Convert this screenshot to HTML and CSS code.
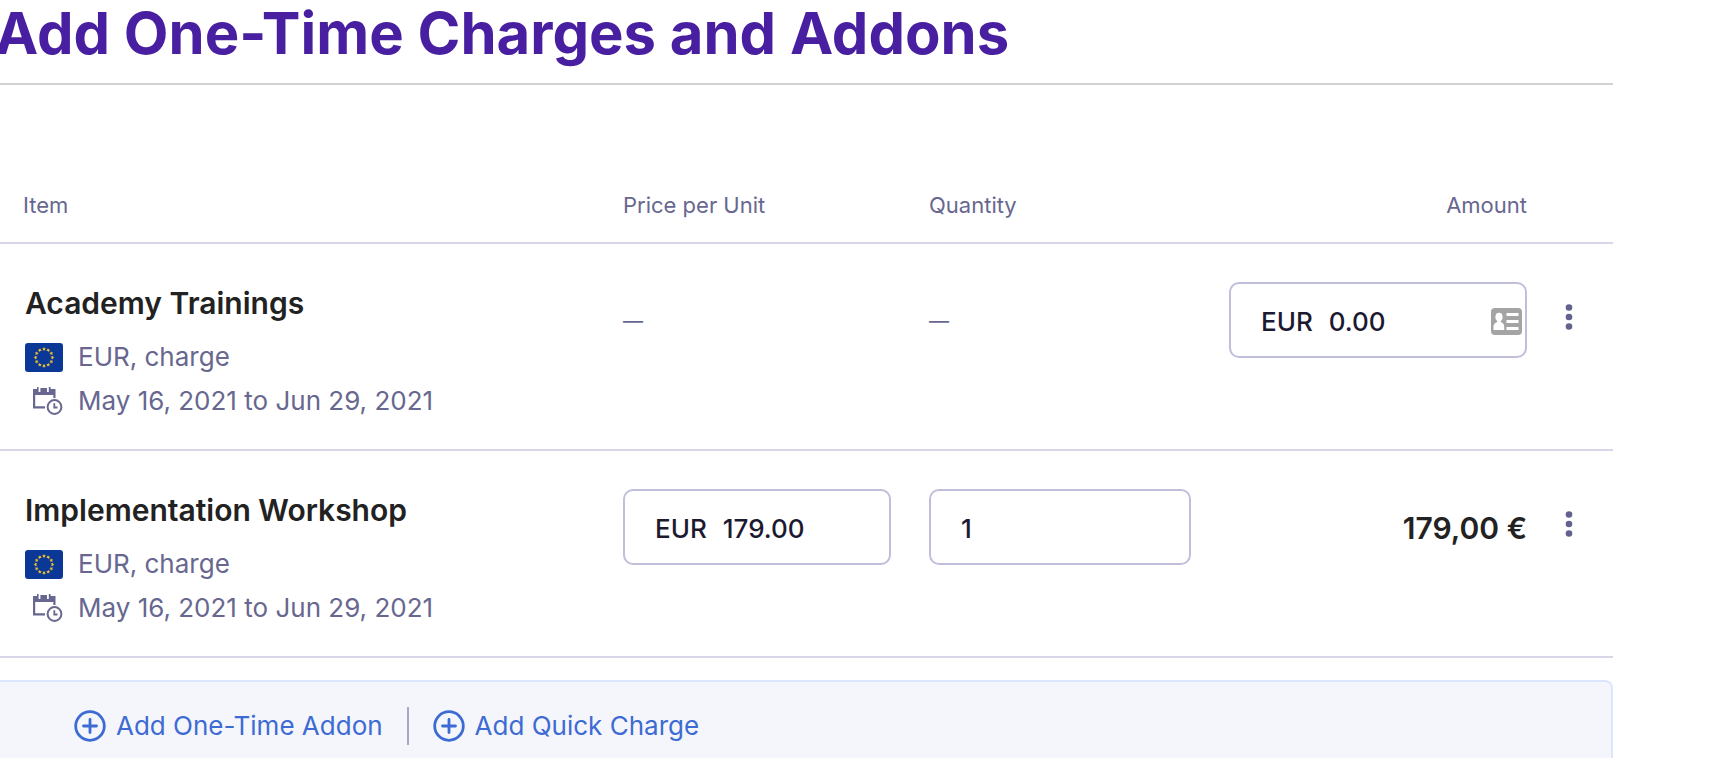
FILE: index.html
```html
<!DOCTYPE html>
<html lang="en">
<head>
<meta charset="utf-8">
<title>Add One-Time Charges and Addons</title>
<link rel="stylesheet" href="styles.css">
</head>
<body>
<svg class="sprite" aria-hidden="true">
  <symbol id="flag-eu" viewBox="0 0 38 29">
    <rect width="38" height="29" rx="3" fill="#0b3796"/>
    <g fill="#f0c52c">
      <path id="star" d="M19 4l.6 1.3 1.4.1-1.1.9.4 1.4-1.3-.8-1.3.8.4-1.4-1.1-.9 1.4-.1z"/>
      <use href="#star" transform="rotate(30 19 14.5)"/>
      <use href="#star" transform="rotate(60 19 14.5)"/>
      <use href="#star" transform="rotate(90 19 14.5)"/>
      <use href="#star" transform="rotate(120 19 14.5)"/>
      <use href="#star" transform="rotate(150 19 14.5)"/>
      <use href="#star" transform="rotate(180 19 14.5)"/>
      <use href="#star" transform="rotate(210 19 14.5)"/>
      <use href="#star" transform="rotate(240 19 14.5)"/>
      <use href="#star" transform="rotate(270 19 14.5)"/>
      <use href="#star" transform="rotate(300 19 14.5)"/>
      <use href="#star" transform="rotate(330 19 14.5)"/>
    </g>
  </symbol>
  <symbol id="calendar-clock" viewBox="0 0 30 30">
    <path fill="#67678f" d="M0 3h4V1h1.600v5h1.800V2h6.600v4h1.800V1H17.600v2H22.500V12H20.300V9H2.200V20.300H12V22.500H0z"/>
    <circle cx="21.500" cy="21" r="6.900" fill="none" stroke="#67678f" stroke-width="2"/>
    <path fill="none" stroke="#67678f" stroke-width="1.800" d="M21.300 17.200v4.300h3.200"/>
  </symbol>
  <symbol id="contact-card" viewBox="0 0 31 27">
    <rect width="31" height="27" rx="4" fill="#a4a4a4"/>
    <g fill="#fff">
      <ellipse cx="8" cy="9" rx="3.600" ry="4.300"/>
      <path d="M6.300 12h3.400v2c2.200.8 3.500 2.200 3.500 4.500V22H2.500v-3.500c0-2.300 1.400-3.700 3.800-4.500z"/>
      <rect x="15.500" y="5" width="12" height="3"/>
      <rect x="15.500" y="12" width="12" height="3"/>
      <rect x="15.500" y="19" width="12" height="3"/>
    </g>
  </symbol>
  <symbol id="dots" viewBox="0 0 8 28">
    <g fill="#62628f"><circle cx="4" cy="4.500" r="3.300"/><circle cx="4" cy="14" r="3.300"/><circle cx="4" cy="23.500" r="3.300"/></g>
  </symbol>
  <symbol id="circle-plus" viewBox="0 0 32 32">
    <g fill="none" stroke="#3d6bd3" stroke-width="2.800"><circle cx="16" cy="16" r="14.300"/><path stroke-linecap="round" d="M16 9.500v13M9.500 16h13"/></g>
  </symbol>
</svg>

<main class="page">
  <h1 class="title">Add One-Time Charges and Addons</h1>
  <table class="charges">
    <colgroup>
      <col><col class="col-price"><col class="col-quantity"><col class="col-amount"><col class="col-menu">
    </colgroup>
    <thead>
      <tr>
        <th scope="col" class="item-head">Item</th>
        <th scope="col">Price per Unit</th>
        <th scope="col">Quantity</th>
        <th scope="col" class="right">Amount</th>
        <td></td>
      </tr>
    </thead>
    <tbody>
      <tr>
        <td class="item">
          <div class="name">Academy Trainings</div>
          <div class="meta"><svg class="flag"><use href="#flag-eu"/></svg><span>EUR, charge</span></div>
          <div class="meta"><svg class="calendar"><use href="#calendar-clock"/></svg><span>May 16, 2021 to Jun 29, 2021</span></div>
        </td>
        <td><div class="cell empty">—</div></td>
        <td><div class="cell empty">—</div></td>
        <td class="amount">
          <div class="field">
            <label for="amount-1">EUR</label>
            <input id="amount-1" type="text" value="0.00">
            <svg class="card"><use href="#contact-card"/></svg>
          </div>
        </td>
        <td><button class="menu" type="button" aria-label="More actions"><svg><use href="#dots"/></svg></button></td>
      </tr>
      <tr>
        <td class="item">
          <div class="name">Implementation Workshop</div>
          <div class="meta"><svg class="flag"><use href="#flag-eu"/></svg><span>EUR, charge</span></div>
          <div class="meta"><svg class="calendar"><use href="#calendar-clock"/></svg><span>May 16, 2021 to Jun 29, 2021</span></div>
        </td>
        <td>
          <div class="field">
            <label for="price-2">EUR</label>
            <input id="price-2" type="text" value="179.00">
          </div>
        </td>
        <td>
          <div class="field">
            <input type="text" value="1" aria-label="Quantity">
          </div>
        </td>
        <td class="amount"><div class="cell total">179,00 €</div></td>
        <td><button class="menu" type="button" aria-label="More actions"><svg><use href="#dots"/></svg></button></td>
      </tr>
    </tbody>
  </table>
  <div class="actions">
    <button class="add" type="button"><svg><use href="#circle-plus"/></svg>Add One-Time Addon</button>
    <span class="divider"></span>
    <button class="add" type="button"><svg><use href="#circle-plus"/></svg>Add Quick Charge</button>
  </div>
</main>
</body>
</html>
```
FILE: styles.css
```css
* { box-sizing: border-box; }

body {
  margin: 0;
  overflow: hidden;
  background: #fff;
  color: #67678f;
  font: 26px/44px Inter, "Liberation Sans", sans-serif;
}

svg { display: block; flex: none; }
.sprite { position: absolute; width: 0; height: 0; }

.page { margin-right: 99px; }

.title {
  margin: 0 0 0 -5px;
  padding: 0 0 17px 0;
  box-shadow: 0 2px #d2d2d2;
  color: #471fa0;
  font-size: 58px;
  line-height: 66px;
  font-weight: 700;
  white-space: nowrap;
}

.charges {
  width: 100%;
  margin-top: 82px;
  table-layout: fixed;
  border-collapse: separate;
  border-spacing: 0;
}
.col-price { width: 306px; }
.col-quantity { width: 300px; }
.col-amount { width: 298px; }
.col-menu { width: 86px; }

th, td {
  padding: 0 38px 0 0;
  border-bottom: 2px solid #d8d6e8;
  text-align: left;
  vertical-align: top;
}
th {
  padding-top: 24px;
  padding-bottom: 21px;
  font-size: 22px;
  line-height: 32px;
  font-weight: 400;
}
th.item-head { padding-left: 23px; }
th.right, td.amount { padding-right: 0; text-align: right; }

tbody td { padding-top: 38px; }
tbody td:last-child { padding-right: 0; }
tbody td.item { padding: 36px 0 26px 25px; }

.name {
  margin-bottom: 9px;
  color: #222;
  font-size: 30px;
  line-height: 46px;
  font-weight: 600;
}
.meta { display: flex; align-items: center; gap: 15px; }
.flag { width: 38px; height: 29px; }
.calendar { width: 30px; height: 30px; margin-left: 8px; }

.cell {
  height: 76px;
  padding-top: 1px;
  line-height: 76px;
}
.empty { font-size: 20px; }
.total { color: #222; font-size: 30px; font-weight: 600; }

.field {
  display: flex;
  align-items: center;
  gap: 16px;
  height: 76px;
  padding: 3px 3px 0 30px;
  border: 2px solid #c0bfdb;
  border-radius: 10px;
  color: #1c1a30;
}
.field label, .field input { font: 500 26px/44px Inter, "Liberation Sans", sans-serif; }
.field input {
  flex: 1;
  min-width: 0;
  padding: 0;
  border: 0;
  outline: 0;
  background: none;
  color: inherit;
}
.card { width: 31px; height: 27px; }

button { padding: 0; border: 0; background: none; cursor: pointer; }
.menu { display: block; margin: 21px 0 0 38px; }
.menu svg { width: 8px; height: 28px; }

.actions {
  display: flex;
  align-items: center;
  gap: 24px;
  height: 91px;
  margin-top: 22px;
  padding-left: 74px;
  border: 2px solid #dbe6fd;
  border-left: 0;
  border-radius: 0 8px 0 0;
  background: #f5f6fb;
}
.add {
  display: flex;
  align-items: center;
  gap: 10px;
  color: #3d6bd3;
  font: 26px/44px Inter, "Liberation Sans", sans-serif;
}
.add svg { width: 32px; height: 32px; }
.divider { width: 2px; height: 38px; background: #a9a5c4; }
```
